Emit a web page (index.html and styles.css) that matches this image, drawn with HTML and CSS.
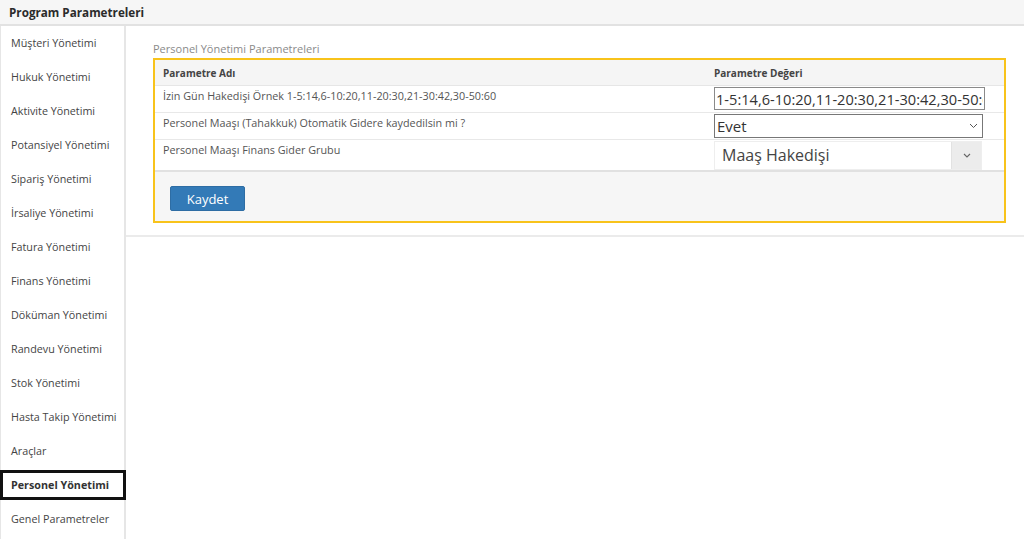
FILE: index.html
```html
<!DOCTYPE html>
<html>
    <head>
        <meta charset="utf-8">
        <title>Program Parametreleri</title>
        <link rel="stylesheet" href="styles.css">
    </head>
    <body>

        <div class="page-title">Program Parametreleri</div>

        <div class="layout">

            <ul class="side-menu">
                <li>Müşteri Yönetimi</li>
                <li>Hukuk Yönetimi</li>
                <li>Aktivite Yönetimi</li>
                <li>Potansiyel Yönetimi</li>
                <li>Sipariş Yönetimi</li>
                <li>İrsaliye Yönetimi</li>
                <li>Fatura Yönetimi</li>
                <li>Finans Yönetimi</li>
                <li>Döküman Yönetimi</li>
                <li>Randevu Yönetimi</li>
                <li>Stok Yönetimi</li>
                <li>Hasta Takip Yönetimi</li>
                <li>Araçlar</li>
                <li class="active">Personel Yönetimi</li>
                <li>Genel Parametreler</li>
            </ul>

            <div class="content">
                <div class="section">
                    <div class="section-label">Personel Yönetimi Parametreleri</div>

                    <div class="param-box">
                        <table class="params">
                            <thead>
                                <tr>
                                    <th class="col-name">Parametre Adı</th>
                                    <th class="col-value">Parametre Değeri</th>
                                </tr>
                            </thead>
                            <tbody>
                                <tr>
                                    <td>İzin Gün Hakedişi Örnek 1-5:14,6-10:20,11-20:30,21-30:42,30-50:60</td>
                                    <td><input class="field" type="text" value="1-5:14,6-10:20,11-20:30,21-30:42,30-50:60"></td>
                                </tr>
                                <tr>
                                    <td>Personel Maaşı (Tahakkuk) Otomatik Gidere kaydedilsin mi ?</td>
                                    <td>
                                        <div class="field select">
                                            <span>Evet</span>
                                            <svg width="9" height="6" viewBox="0 0 9 6"><path d="M1 1l3.5 3.5L8 1" fill="none" stroke="#555" stroke-width="1"/></svg>
                                        </div>
                                    </td>
                                </tr>
                                <tr class="tall">
                                    <td>Personel Maaşı Finans Gider Grubu</td>
                                    <td>
                                        <div class="combo">
                                            <span class="combo-text">Maaş Hakedişi</span>
                                            <span class="combo-arrow">
                                                <svg width="8" height="5" viewBox="0 0 8 5"><path d="M1 1l3 3 3-3" fill="none" stroke="#666" stroke-width="1.1"/></svg>
                                            </span>
                                        </div>
                                    </td>
                                </tr>
                            </tbody>
                        </table>

                        <div class="box-footer">
                            <button class="btn-save">Kaydet</button>
                        </div>
                    </div>
                </div>
            </div>

        </div>

    </body>
</html>
```

FILE: styles.css
```css
/** Base **/
html, body {
    margin: 0;
    padding: 0;
    background: #fff;
    font-family: "Open Sans", "Liberation Sans", sans-serif;
    color: #333;
}

/** Title bar **/
.page-title {
    height: 26px;
    line-height: 25px;
    padding-left: 9px;
    background-color: #f6f6f6;
    border-bottom: 2px solid #e2e2e2;
    box-sizing: border-box;
    font-size: 11.7px;
    font-weight: bold;
    color: #2b2b2b;
}

/** Layout **/
.layout {
    display: flex;
    align-items: flex-start;
}

/** Side menu **/
.side-menu {
    list-style-type: none;
    margin: 0;
    padding: 0;
    width: 126px;
    min-height: 513px;
    border-left: 1px solid #e6e6e6;
    border-right: 2px solid #e6e6e6;
    box-sizing: border-box;
    flex-shrink: 0;
}
.side-menu li {
    display: flex;
    align-items: center;
    height: 34px;
    padding-left: 10px;
    font-size: 10.75px;
    color: #444;
    white-space: nowrap;
}
.side-menu li.active {
    height: 30px;
    margin: 2px -2px 2px -1px;
    padding-left: 8px;
    border: 3px solid #111;
    box-sizing: border-box;
    font-weight: bold;
    color: #333;
}

/** Content **/
.content {
    flex: 1;
}
.section {
    padding: 16px 18px 12px 27px;
    border-bottom: 2px solid #ebebeb;
}
.section-label {
    font-size: 11px;
    color: #8a8a8a;
    line-height: 14px;
    margin-bottom: 2px;
}

/** Parameter box **/
.param-box {
    border: 2px solid #f8c31b;
    background-color: #f6f6f6;
}
.params {
    width: 100%;
    border-collapse: collapse;
    font-size: 10.8px;
    color: #555;
}
.params th {
    height: 25px;
    padding: 0 8px;
    text-align: left;
    font-size: 10px;
    font-weight: bold;
    color: #444;
    background-color: #f5f5f5;
    border-bottom: 1px solid #e6e6e6;
}
.params th.col-value {
    width: 282px;
}
.params td {
    height: 24px;
    padding: 1px 8px 1px 8px;
    vertical-align: top;
    line-height: 17px;
    background-color: #fff;
    border-bottom: 1px solid #e8e8e8;
}
.params tr.tall td {
    height: 29px;
    padding-bottom: 0;
}
.params tbody tr:last-child td {
    border-bottom: 2px solid #e1e1e1;
}

/** Fields **/
.field {
    display: block;
    width: 271px;
    height: 23px;
    margin: 0;
    padding: 0 1px;
    border: 1px solid #8a8a8a;
    box-sizing: border-box;
    font-family: "Open Sans", "Liberation Sans", sans-serif;
    font-size: 14.6px;
    color: #333;
    background: #fff;
    outline: none;
}
.field.select {
    display: flex;
    align-items: center;
    justify-content: space-between;
    width: 269px;
    height: 24px;
    padding: 0 4px 0 2px;
    border-color: #777;
    font-size: 15px;
}

.combo {
    display: flex;
    width: 268px;
    height: 29px;
    border: 1px solid #eee;
    box-sizing: border-box;
    background: #fff;
}
.combo-text {
    flex: 1;
    padding-left: 7px;
    line-height: 27px;
    font-size: 16px;
    color: #444;
}
.combo-arrow {
    display: flex;
    align-items: center;
    justify-content: center;
    width: 29px;
    background-color: #ececec;
    border-left: 1px solid #e2e2e2;
}

/** Footer **/
.box-footer {
    padding: 14px 15px 0 15px;
    height: 49px;
    box-sizing: border-box;
}
.btn-save {
    width: 75px;
    height: 25px;
    padding: 0;
    border: 1px solid #2e6da4;
    border-radius: 2px;
    background-color: #337ab7;
    color: #fff;
    font-family: "Open Sans", "Liberation Sans", sans-serif;
    font-size: 13px;
    cursor: pointer;
}
```
